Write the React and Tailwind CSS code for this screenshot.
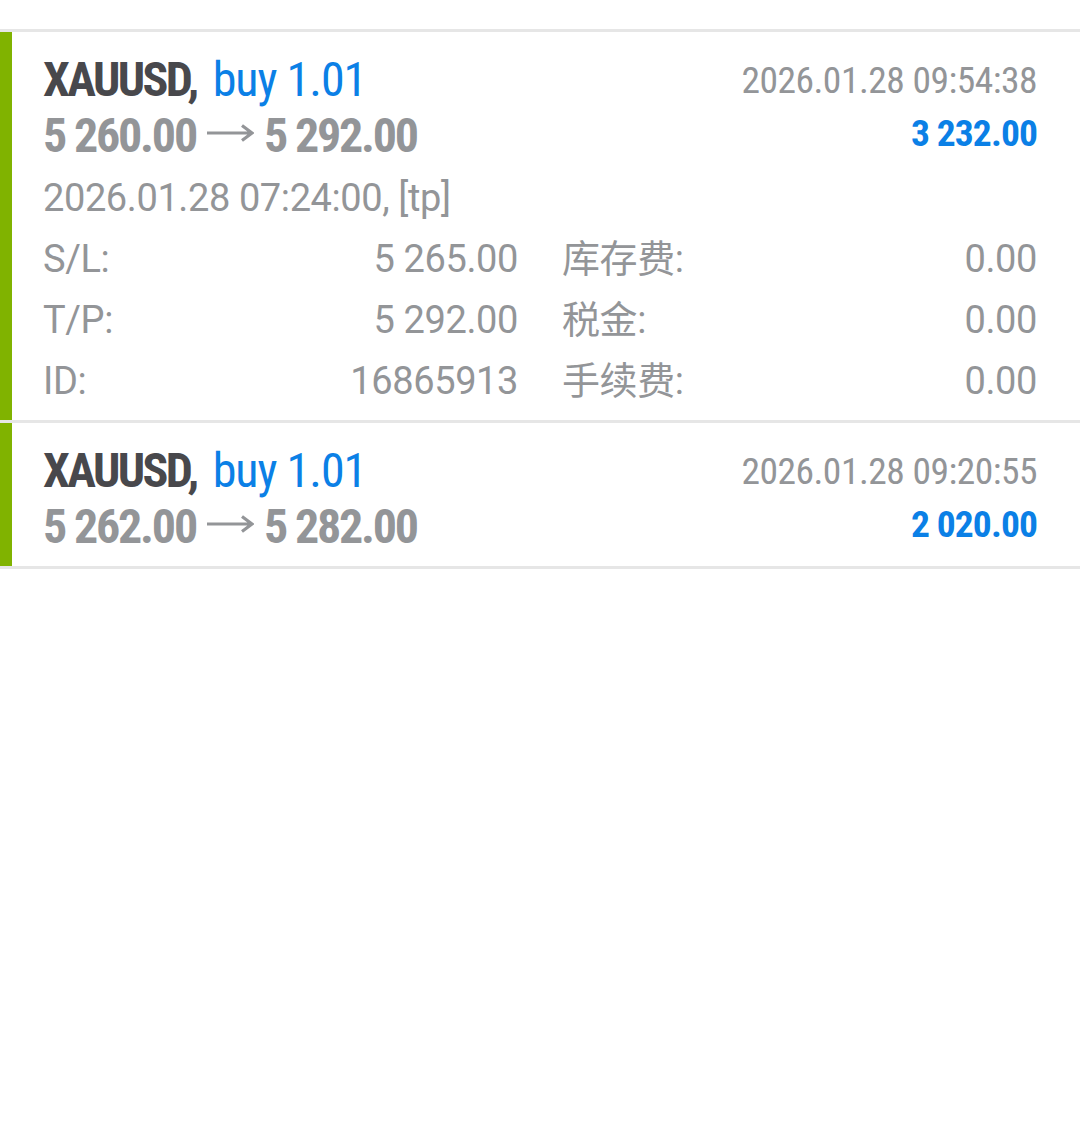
import React from "react";

// ── trade history rows (closed positions) ──
const trades = [
  {
    symbol: "XAUUSD",
    side: "buy 1.01",
    open: "5 260.00",
    close: "5 292.00",
    time: "2026.01.28 09:54:38",
    profit: "3 232.00",
    expanded: true,
    openTime: "2026.01.28 07:24:00, [tp]",
    sl: "5 265.00",
    tp: "5 292.00",
    id: "16865913",
    swap: "0.00",
    tax: "0.00",
    fee: "0.00",
  },
  {
    symbol: "XAUUSD",
    side: "buy 1.01",
    open: "5 262.00",
    close: "5 282.00",
    time: "2026.01.28 09:20:55",
    profit: "2 020.00",
    expanded: false,
  },
];

const cond = "font-['Roboto_Condensed',Roboto,sans-serif] [font-stretch:condensed]";
const body = "font-['Roboto','Noto_Sans_CJK_SC',sans-serif]";

// long thin arrow between open and close price
function Arrow() {
  return (
    <svg width="48" height="20" viewBox="0 0 48 20" className="inline-block mx-[10px] -translate-y-[6px]">
      <path d="M1 10H46M36 2.5L46 10L36 17.5" fill="none" stroke="#939598" strokeWidth="3.2" />
    </svg>
  );
}

function Detail({ label, value }) {
  return (
    <div className="flex items-baseline justify-between">
      <span>{label}</span>
      <span>{value}</span>
    </div>
  );
}

function TradeRow({ t }) {
  return (
    <div className="flex border-b-[3px] border-[#e6e6e6]">
      {/* buy marker */}
      <div className="w-[12px] shrink-0 bg-[#80b300]" />

      <div className={`flex-1 pl-[31px] pr-[43px] pt-[20px] ${t.expanded ? "pb-[8px]" : "pb-[11px]"}`}>
        {/* header */}
        <div className="flex justify-between">
          <div className={`${cond} text-[48px] leading-[56px] font-bold`}>
            <div className="text-[#48484c] whitespace-nowrap">
              <span className="tracking-[-2.6px]">{t.symbol},</span>
              <span className="ml-[16px] font-normal tracking-[-1px] text-[#0b80e6]">{t.side}</span>
            </div>
            <div className="text-[#939598] tracking-[-2.2px] whitespace-nowrap">
              {t.open}
              <Arrow />
              {t.close}
            </div>
          </div>
          <div className={`${cond} text-right text-[37.5px] leading-[53px] pt-[2px]`}>
            <div className="text-[#939598] tracking-[-0.5px]">{t.time}</div>
            <div className="font-bold text-[#0b80e6] tracking-[-0.9px]">{t.profit}</div>
          </div>
        </div>

        {/* details */}
        {t.expanded && (
          <div className={`${body} mt-[4px] text-[38px] leading-[61px] tracking-[-0.4px] text-[#939598]`}>
            <div>{t.openTime}</div>
            <div className="grid grid-cols-2 gap-x-[44px]">
              <Detail label="S/L:" value={t.sl} />
              <Detail label="库存费:" value={t.swap} />
              <Detail label="T/P:" value={t.tp} />
              <Detail label="税金:" value={t.tax} />
              <Detail label="ID:" value={t.id} />
              <Detail label="手续费:" value={t.fee} />
            </div>
          </div>
        )}
      </div>
    </div>
  );
}

export default function App() {
  return (
    <div className="w-[1080px] h-[1136px] bg-white overflow-hidden">
      {/* previous row, scrolled mostly out of view */}
      <div className="h-[29px] overflow-hidden border-b-[3px] border-[#e6e6e6] box-content">
        <div className={`${body} -mt-[36px] pl-[84px] text-[38px] leading-[46px] text-[#d0d0d2]`}>
          2026.01.28 06:58:12
        </div>
      </div>

      {trades.map((t, i) => (
        <TradeRow key={i} t={t} />
      ))}
    </div>
  );
}
